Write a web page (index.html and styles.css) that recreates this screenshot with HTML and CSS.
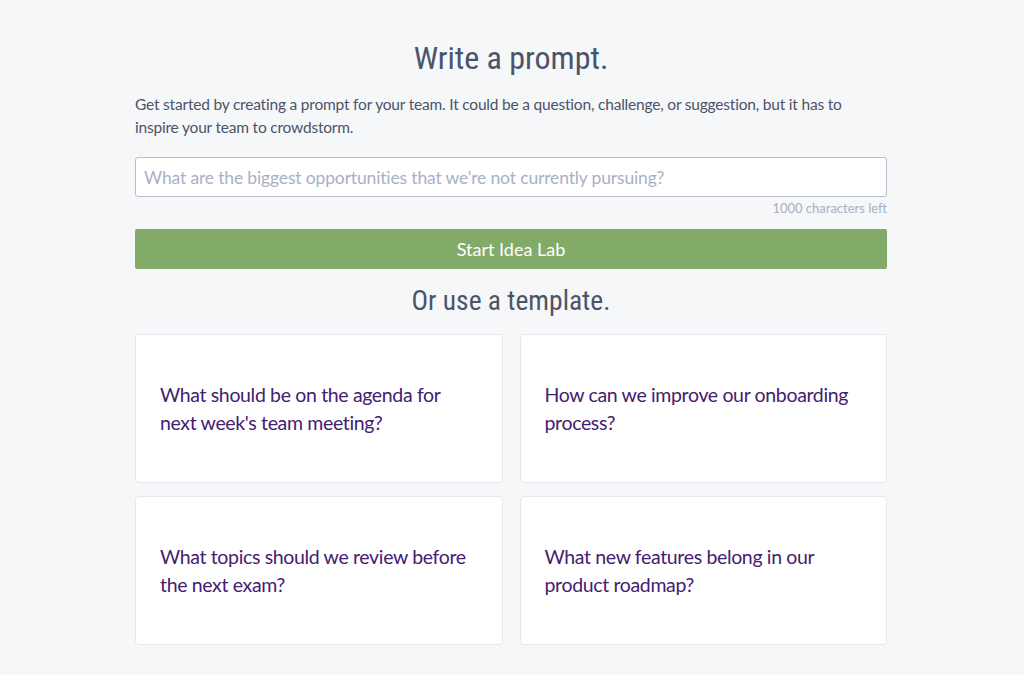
FILE: index.html
```html
<!DOCTYPE html>
<html lang="en">
<head>
<meta charset="utf-8">
<title>Write a prompt</title>
<link rel="stylesheet" href="styles.css">
</head>
<body>
<main class="page">
  <h1 class="title">Write a prompt.</h1>
  <p class="intro">Get started by creating a prompt for your team. It could be a question, challenge, or suggestion, but it has to inspire your team to crowdstorm.</p>
  <input class="prompt-input" type="text" placeholder="What are the biggest opportunities that we're not currently pursuing?">
  <div class="counter">1000 characters left</div>
  <button class="start-btn" type="button">Start Idea Lab</button>
  <h2 class="subtitle">Or use a template.</h2>
  <div class="templates">
    <div class="card"><p>What should be on the agenda for next week's team meeting?</p></div>
    <div class="card"><p>How can we improve our onboarding process?</p></div>
    <div class="card"><p>What topics should we review before the next exam?</p></div>
    <div class="card"><p>What new features belong in our product roadmap?</p></div>
  </div>
</main>
</body>
</html>
```
FILE: styles.css
```css
html, body {
  margin: 0;
  padding: 0;
}
body {
  background: #f6f7f9;
  font-family: "Source Sans Pro", "Lato", "Noto Sans", sans-serif;
  color: #4a5568;
  padding-right: 2px;
}
.page {
  width: 752px;
  margin: 0 auto;
  padding-top: 36px;
}
.title {
  margin: 0;
  text-align: center;
  font-family: "Roboto Condensed", "DejaVu Sans Condensed", "Roboto", sans-serif;
  font-weight: 400;
  font-size: 32px;
  line-height: 44px;
  color: #4b5469;
}
.intro {
  margin: 13px 0 18px;
  font-size: 15.5px;
  letter-spacing: -0.2px;
  line-height: 23px;
  color: #4b5469;
}
.prompt-input {
  display: block;
  box-sizing: border-box;
  width: 100%;
  height: 40px;
  margin: 0;
  padding: 0 8px;
  border: 1px solid #b9bdcd;
  border-radius: 3px;
  background: #fff;
  font-family: inherit;
  font-size: 17.5px;
  letter-spacing: -0.15px;
  color: #4b5469;
  outline: none;
}
.prompt-input::placeholder {
  color: #a9b0c4;
}
.counter {
  text-align: right;
  font-size: 13px;
  line-height: 20px;
  margin-top: 1px;
  color: #a6b0c2;
}
.start-btn {
  display: block;
  width: 100%;
  height: 40px;
  margin-top: 11px;
  border: 0;
  border-radius: 2px;
  background: #82ab69;
  color: #fff;
  font-family: inherit;
  font-size: 18px;
}
.subtitle {
  margin: 13px 0 0;
  text-align: center;
  font-family: "Roboto Condensed", "DejaVu Sans Condensed", "Roboto", sans-serif;
  font-weight: 400;
  font-size: 27.5px;
  line-height: 38px;
  color: #4b5469;
}
.templates {
  margin-top: 14px;
  display: grid;
  grid-template-columns: 1fr 1fr;
  column-gap: 17px;
  row-gap: 13px;
}
.card {
  box-sizing: border-box;
  height: 149px;
  background: #fff;
  border: 1px solid #e6e8ee;
  border-radius: 4px;
  padding: 0 24px;
  display: flex;
  align-items: center;
}
.card p {
  margin: 0;
  font-size: 19.5px;
  letter-spacing: -0.35px;
  line-height: 28px;
  color: #44206f;
}
```
